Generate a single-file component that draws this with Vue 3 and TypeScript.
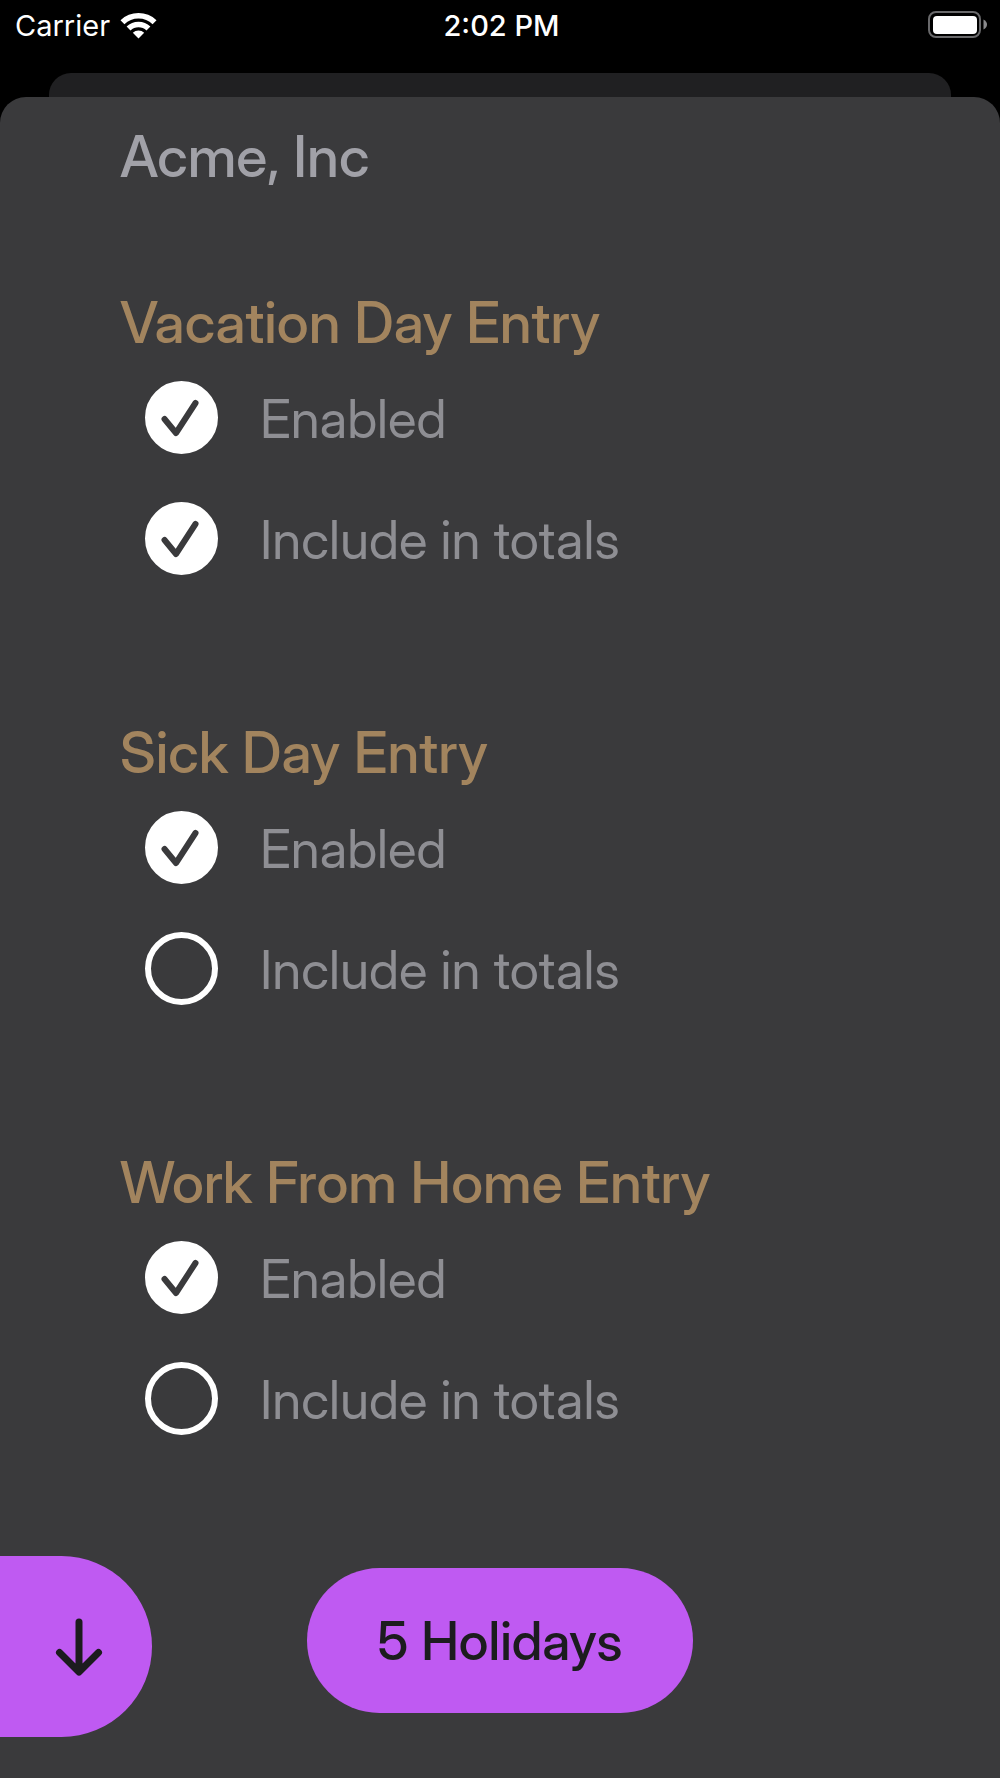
<script setup lang="ts">
import { reactive } from 'vue'

interface EntrySettings {
  id: string
  title: string
  enabled: boolean
  included: boolean
}

const company = 'Acme, Inc'
const holidayCount = 5

const entries = reactive<EntrySettings[]>([
  { id: 'vacation', title: 'Vacation Day Entry', enabled: true, included: true },
  { id: 'sick', title: 'Sick Day Entry', enabled: true, included: false },
  { id: 'wfh', title: 'Work From Home Entry', enabled: true, included: false },
])
</script>

<template>
  <div class="screen">
    <header class="status">
      <div class="carrier">
        <span>Carrier</span>
        <svg class="wifi" viewBox="0 0 37 27" aria-hidden="true">
          <path d="M0.5 8.2 A26 26 0 0 1 36.5 8.2 L32.6 12.2 A20.3 20.3 0 0 0 4.4 12.2 Z" />
          <path d="M6.6 14.5 A17.2 17.2 0 0 1 30.4 14.5 L26.5 18.4 A11.6 11.6 0 0 0 10.5 18.4 Z" />
          <path d="M12.8 20.8 A8.4 8.4 0 0 1 24.2 20.8 L18.5 26.6 Z" />
        </svg>
      </div>
      <time class="clock">2:02 PM</time>
      <svg class="battery" viewBox="0 0 60 28" aria-hidden="true">
        <rect x="1" y="1" width="51" height="25" rx="7" fill="none" stroke="#69696b" stroke-width="2" />
        <rect x="5" y="5" width="44" height="18" rx="4" fill="#fff" />
        <path d="M55.5 8.5 Q59 10.5 59 13.5 Q59 16.5 55.5 18.5 Z" fill="#8a8a8c" />
      </svg>
    </header>

    <div class="backdrop"></div>

    <main class="sheet">
      <h1 class="company">{{ company }}</h1>

      <div class="entries">
        <section v-for="entry in entries" :key="entry.id" class="entry">
          <h2 class="entry-title">{{ entry.title }}</h2>
          <div class="options">
            <label class="option">
              <span class="tick">
                <input v-model="entry.enabled" type="checkbox" :name="`${entry.id}-enabled`" />
                <svg viewBox="0 0 73 73" aria-hidden="true">
                  <path d="M19.5 38 L31 52 L50.5 22" />
                </svg>
              </span>
              <span class="option-text">Enabled</span>
            </label>
            <label class="option">
              <span class="tick">
                <input v-model="entry.included" type="checkbox" :name="`${entry.id}-included`" />
                <svg viewBox="0 0 73 73" aria-hidden="true">
                  <path d="M19.5 38 L31 52 L50.5 22" />
                </svg>
              </span>
              <span class="option-text">Include in totals</span>
            </label>
          </div>
        </section>
      </div>

      <footer class="actions">
        <button class="dismiss" type="button" aria-label="Dismiss">
          <svg viewBox="0 0 48 60" aria-hidden="true">
            <path d="M24 5 V54 M4.5 35.5 L24 55 L43.5 35.5" />
          </svg>
        </button>
        <button class="holidays" type="button">{{ holidayCount }} Holidays</button>
      </footer>
    </main>
  </div>
</template>

<style>
body {
  margin: 0;
  background: #000;
}
</style>

<style scoped>
.screen {
  display: flex;
  flex-direction: column;
  min-height: 100vh;
  background: #000;
  color: #fff;
  font-family: "Inter Display", Inter, "Liberation Sans", sans-serif;
}

.status {
  display: grid;
  grid-template-columns: 1fr auto 1fr;
  align-items: center;
  height: 50px;
  margin-bottom: 23px;
  padding: 0 12px 0 15px;
  font-family: Inter, "Liberation Sans", sans-serif;
  font-size: 29px;
}

.carrier {
  display: flex;
  align-items: center;
  gap: 10px;
}

.wifi {
  width: 37px;
  height: 27px;
  fill: #fff;
}

.clock {
  font-weight: 500;
}

.battery {
  justify-self: end;
  width: 60px;
  height: 28px;
}

.backdrop {
  height: 24px;
  margin: 0 49px;
  border-radius: 22px 22px 0 0;
  background: #202022;
}

.sheet {
  display: flex;
  flex: 1;
  flex-direction: column;
  padding: 26px 0 41px;
  border-radius: 26px 26px 0 0;
  background: #3a3a3c;
}

.company,
.entry-title {
  margin: 0;
  font-size: 57px;
  font-weight: 500;
  line-height: 68px;
}

.company {
  margin: 0 120px 98px;
  color: #a1a1a8;
}

.entries {
  display: flex;
  flex-direction: column;
  gap: 144px;
  padding: 0 120px;
}

.entry-title {
  margin-bottom: 24px;
  color: #a2845e;
}

.options {
  display: flex;
  flex-direction: column;
  align-items: flex-start;
  gap: 48px;
  padding-left: 25px;
}

.option {
  display: flex;
  align-items: center;
  gap: 42px;
  color: #8e8e93;
  font-size: 53px;
  line-height: 64px;
}

.option-text {
  padding-top: 2px;
}

.tick {
  display: grid;
  width: 73px;
  height: 73px;
}

.tick input {
  grid-area: 1 / 1;
  box-sizing: border-box;
  width: 73px;
  height: 73px;
  margin: 0;
  border: 6px solid #fff;
  border-radius: 50%;
  appearance: none;
}

.tick input:checked {
  background: #fff;
}

.tick svg {
  grid-area: 1 / 1;
  visibility: hidden;
  fill: none;
  stroke: #3a3a3c;
  stroke-width: 6;
  stroke-linecap: round;
  stroke-linejoin: round;
  pointer-events: none;
}

.tick input:checked + svg {
  visibility: visible;
}

.actions {
  display: grid;
  grid-template-columns: 1fr auto 1fr;
  align-items: start;
  margin-top: auto;
  padding-top: 48px;
}

.dismiss,
.holidays {
  border: 0;
  background: #bf5af2;
  color: #1c1c1e;
  font: inherit;
}

.dismiss {
  display: flex;
  align-items: center;
  justify-content: flex-end;
  width: 152px;
  height: 181px;
  padding: 0 49px 0 0;
  border-radius: 0 91px 91px 0;
}

.dismiss svg {
  width: 48px;
  height: 60px;
  fill: none;
  stroke: currentColor;
  stroke-width: 7;
  stroke-linecap: round;
  stroke-linejoin: round;
}

.holidays {
  min-width: 386px;
  height: 145px;
  margin-top: 12px;
  padding: 0 64px;
  border-radius: 73px;
  font-size: 53px;
  font-weight: 500;
}
</style>
